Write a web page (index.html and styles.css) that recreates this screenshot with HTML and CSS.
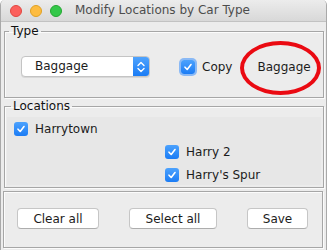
FILE: index.html
```html
<!DOCTYPE html>
<html lang="en">
<head>
  <meta charset="UTF-8">
  <meta name="viewport" content="width=device-width, initial-scale=1.0">
  <title>Modify Locations by Car Type</title>
  <link rel="stylesheet" href="styles.css">
</head>
<body>
  <div class="window">
    <div class="titlebar">
      <span class="lights">
        <i class="light red"></i>
        <i class="light yellow"></i>
        <i class="light green"></i>
      </span>
      <span class="title">Modify Locations by Car Type</span>
    </div>
    <div class="content">
      <fieldset class="group type-group">
        <legend>Type</legend>
        <div class="type-row">
          <div class="combo">
            <span class="combo-text">Baggage</span>
            <span class="combo-arrows">
              <svg width="8" height="12" viewBox="0 0 8 12"><path d="M1 4.5 L4 1.5 L7 4.5 M1 7.5 L4 10.5 L7 7.5" fill="none" stroke="#fff" stroke-width="1.4" stroke-linecap="round" stroke-linejoin="round"/></svg>
            </span>
          </div>
          <label class="check copy">
            <span class="box"><svg width="10" height="10" viewBox="0 0 10 10"><path d="M2 5.2 L4.2 7.5 L8 2.5" fill="none" stroke="#fff" stroke-width="1.6" stroke-linecap="round" stroke-linejoin="round"/></svg></span>
            Copy
          </label>
          <span class="type-name">Baggage</span>
        </div>
      </fieldset>
      <fieldset class="group loc-group">
        <legend>Locations</legend>
        <div class="loc-list">
          <label class="check">
            <span class="box"><svg width="10" height="10" viewBox="0 0 10 10"><path d="M2 5.2 L4.2 7.5 L8 2.5" fill="none" stroke="#fff" stroke-width="1.6" stroke-linecap="round" stroke-linejoin="round"/></svg></span>
            Harrytown
          </label>
          <span></span>
          <span></span>
          <label class="check">
            <span class="box"><svg width="10" height="10" viewBox="0 0 10 10"><path d="M2 5.2 L4.2 7.5 L8 2.5" fill="none" stroke="#fff" stroke-width="1.6" stroke-linecap="round" stroke-linejoin="round"/></svg></span>
            Harry 2
          </label>
          <span></span>
          <label class="check">
            <span class="box"><svg width="10" height="10" viewBox="0 0 10 10"><path d="M2 5.2 L4.2 7.5 L8 2.5" fill="none" stroke="#fff" stroke-width="1.6" stroke-linecap="round" stroke-linejoin="round"/></svg></span>
            Harry's Spur
          </label>
        </div>
      </fieldset>
      <div class="buttons">
        <button class="btn clear">Clear all</button>
        <button class="btn select">Select all</button>
        <button class="btn save">Save</button>
      </div>
    </div>
    <div class="highlight"></div>
  </div>
</body>
</html>
```

FILE: styles.css
```css
* {
  margin: 0;
  padding: 0;
  box-sizing: border-box;
}
body {
  font-family: "DejaVu Sans", sans-serif;
  font-size: 12px;
  color: #1c1c1c;
  background: #fff;
}
.window {
  position: relative;
  width: 327px;
  height: 250px;
  background: #ececec;
  border-left: 1px solid #a9a9a9;
  border-right: 1px solid #a9a9a9;
  border-radius: 5px 5px 0 0;
  overflow: hidden;
}
.titlebar {
  height: 22px;
  display: flex;
  align-items: center;
  background: linear-gradient(#ececec, #d8d8d8);
  border-bottom: 1px solid #c2c2c2;
}
.lights {
  display: flex;
  gap: 8px;
  margin-left: 9px;
}
.light {
  display: block;
  width: 12px;
  height: 12px;
  border-radius: 50%;
}
.red {
  background: #fc605c;
  border: 1px solid #e1463f;
}
.yellow {
  background: #fdbc40;
  border: 1px solid #dfa023;
}
.green {
  background: #34c84a;
  border: 1px solid #24a731;
}
.title {
  margin-left: 13px;
  color: #4d4d4d;
  line-height: 15px;
}
.content {
  padding: 0 2px 0 3px;
}
.group {
  border: 1px solid #a6a6a6;
  box-shadow: inset 1px 1px 0 #fbfbfb, 1px 1px 0 #fbfbfb;
  min-width: 0;
}
.group legend {
  margin-left: 4px;
  padding: 0 2px;
  line-height: 15px;
  color: #111;
}
.type-group {
  margin-top: 2px;
  padding: 17px 0 20px 0;
}
.type-row {
  display: flex;
  align-items: center;
  height: 21px;
}
.combo {
  display: flex;
  width: 129px;
  height: 21px;
  margin-left: 16px;
  background: #fff;
  border: 1px solid #c4c4c4;
  border-radius: 4px;
  box-shadow: 0 1px 0 #d8d8d8;
  overflow: hidden;
}
.combo-text {
  flex: 1;
  padding-left: 13px;
  line-height: 19px;
}
.combo-arrows {
  width: 16px;
  display: flex;
  align-items: center;
  justify-content: center;
  background: linear-gradient(#4fa3fd, #1a7cf5);
}
.check {
  display: flex;
  align-items: center;
  gap: 7px;
  white-space: nowrap;
}
.box {
  width: 14px;
  height: 14px;
  border-radius: 3px;
  background: linear-gradient(#4ca2fd, #1b7cf5);
  display: flex;
  align-items: center;
  justify-content: center;
}
.copy {
  margin-left: 31px;
}
.copy .box {
  box-shadow: 0 0 0 2px #8ab9f5;
}
.type-name {
  margin-left: 25px;
}
.loc-group {
  margin-top: 1px;
  padding: 3px 2px 2px 2px;
}
.loc-list {
  height: 68px;
  background: #e7e7e7;
  display: grid;
  grid-template-columns: 151px 1fr;
  grid-template-rows: repeat(3, 23px);
  align-items: center;
  padding: 0 0 0 7px;
}
.buttons {
  margin: 3px 1px 0 -1px;
  height: 57px;
  border: 1px solid #a6a6a6;
  box-shadow: inset 1px 1px 0 #fbfbfb, 1px 1px 0 #fbfbfb;
  display: flex;
  align-items: flex-start;
  gap: 30px;
  padding: 16px 0 0 13px;
}
.btn {
  font-family: "DejaVu Sans", sans-serif;
  font-size: 12px;
  color: #1c1c1c;
  height: 21px;
  background: #fff;
  border: 1px solid #c6c6c6;
  border-bottom-color: #adadad;
  border-radius: 4px;
}
.clear {
  width: 82px;
}
.select {
  width: 88px;
}
.save {
  width: 61px;
}
.highlight {
  position: absolute;
  left: 239px;
  top: 41px;
  width: 81px;
  height: 54px;
  border: 4px solid #ea0a12;
  border-radius: 50%;
}
```
